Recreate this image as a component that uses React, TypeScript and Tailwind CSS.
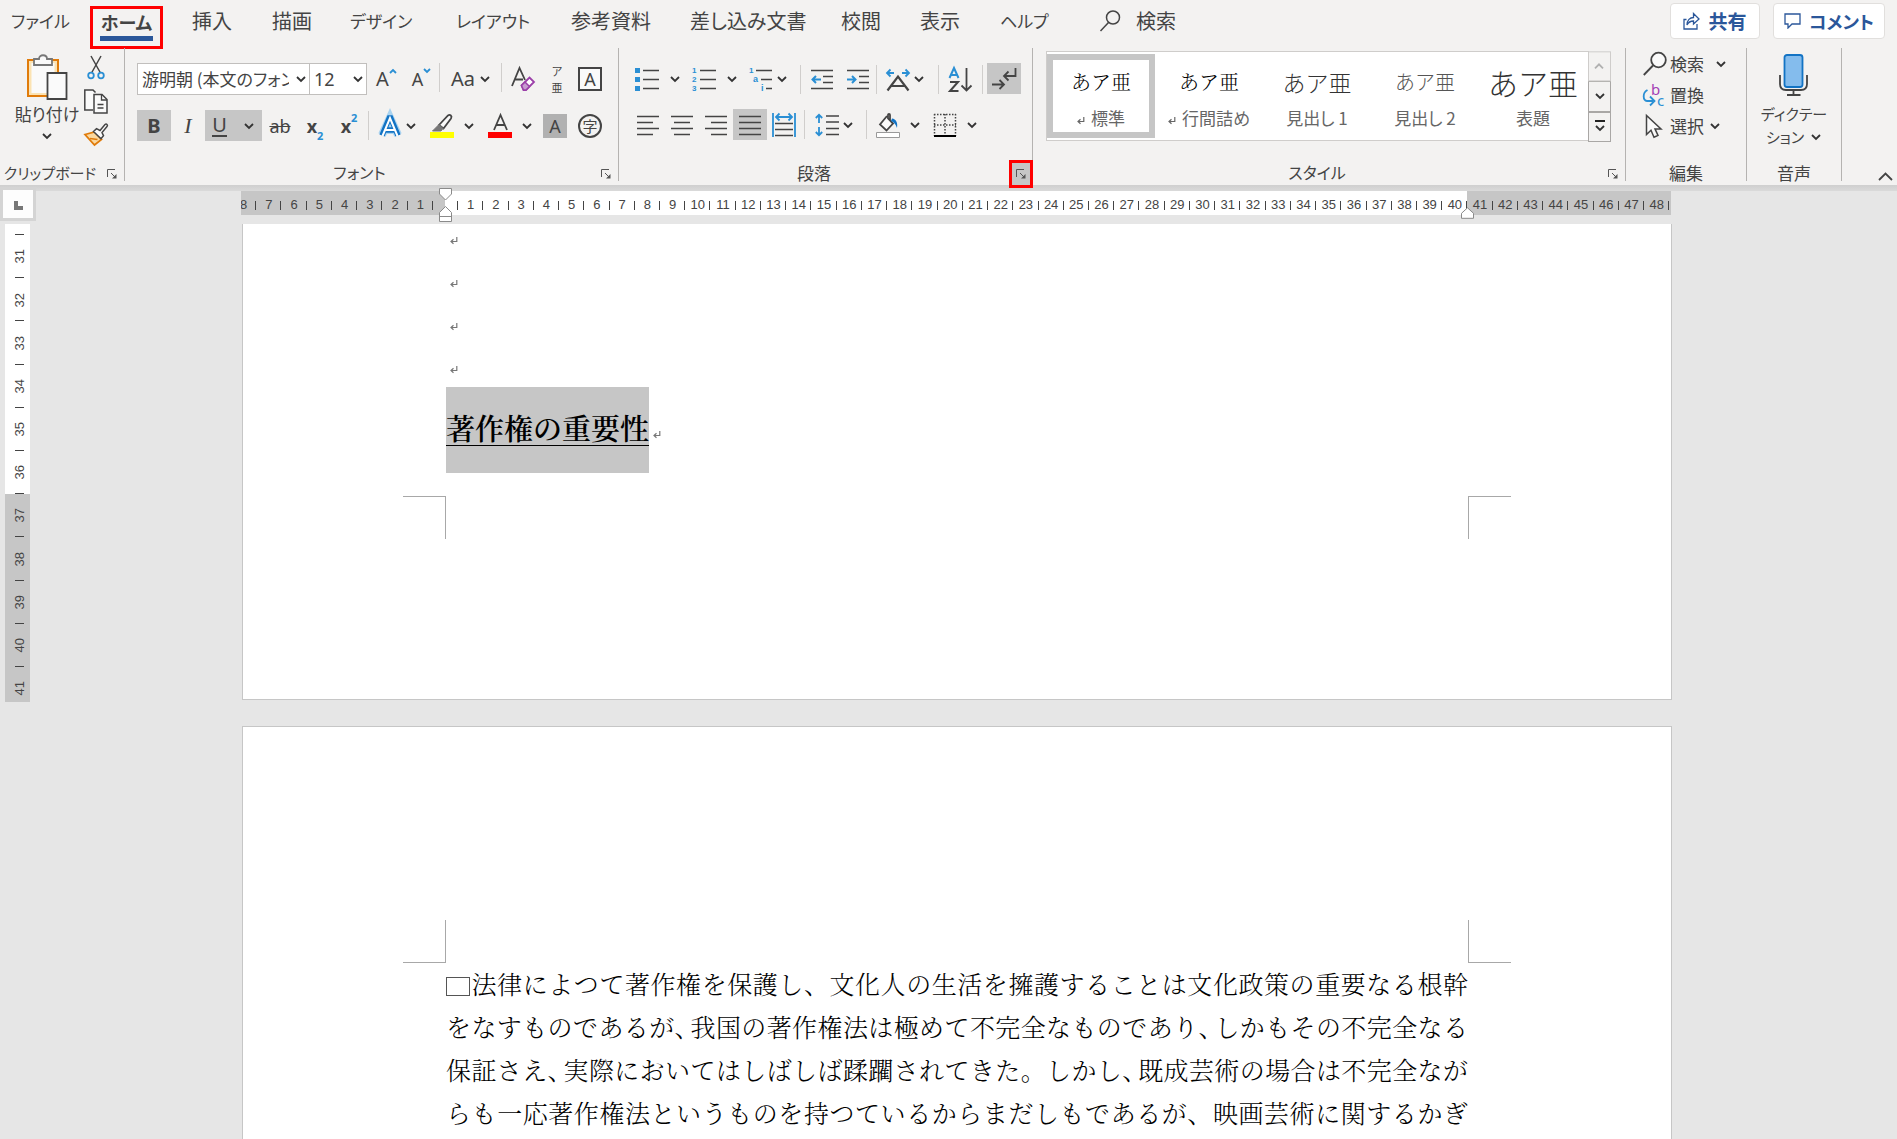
import React from "react";

type Kids = { children?: React.ReactNode };

const UI = "font-['Noto_Sans_CJK_JP','Noto_Sans',sans-serif]";
const MINCHO = "font-['Noto_Serif_CJK_JP','Noto_Serif_JP','Noto_Sans_CJK_JP',serif]";
const KANA = "[font-feature-settings:'palt']";

function Ico({ children, label, w = 24, h = 24 }: Kids & { label?: string; w?: number; h?: number }) {
  return (
    <svg
      width={w}
      height={h}
      viewBox={`0 0 ${w} ${h}`}
      fill="none"
      stroke="#444"
      strokeWidth="1.5"
      className="block shrink-0 overflow-visible"
      role={label ? "img" : undefined}
      aria-label={label}
    >
      {children}
    </svg>
  );
}

function Chev({ color = "#333" }: { color?: string }) {
  return (
    <svg width="12" height="12" viewBox="0 0 12 12" fill="none" stroke={color} strokeWidth="1.8" className="block shrink-0">
      <path d="M2 4l4 4 4-4" />
    </svg>
  );
}

function Btn({ children, label, cls = "w-[34px]" }: Kids & { label: string; cls?: string }) {
  return (
    <button type="button" aria-label={label} className={`flex h-[31px] shrink-0 items-center justify-center ${cls}`}>
      {children}
    </button>
  );
}

function Drop({ children, label, cls }: Kids & { label: string; cls: string }) {
  return (
    <button type="button" aria-label={label} className={`flex h-[31px] shrink-0 items-center pl-2 ${cls}`}>
      {children}
      <Chev />
    </button>
  );
}

function Sep({ cls = "w-1" }: { cls?: string }) {
  return (
    <span className={`flex h-[29px] shrink-0 justify-center ${cls}`}>
      <span className="w-px bg-[#d0cecc]" />
    </span>
  );
}

function LauncherIcon() {
  return (
    <svg width="10" height="10" viewBox="0 0 10 10" fill="none" stroke="#555" strokeWidth="1" className="block overflow-visible">
      <path d="M0.5 8V0.5H8M4 4l4.5 4.5" />
      <path d="M9.5 5v4.5H5z" fill="#555" stroke="none" />
    </svg>
  );
}

function Group({
  children,
  label,
  cls,
  size = "text-base",
  launcher,
  hot,
}: Kids & { label: string; cls: string; size?: string; launcher?: boolean; hot?: boolean }) {
  return (
    <section aria-label={label} className={`flex h-[133px] flex-col border-r border-[#b5b3b1] ${cls}`}>
      <div className="h-[112px]">{children}</div>
      <div className="flex h-[21px] items-start">
        <span className={`flex-1 text-center leading-[25px] whitespace-nowrap ${size} ${KANA}`}>{label}</span>
        {launcher && (
          <button
            type="button"
            aria-label={`${label}の設定`}
            className={
              hot
                ? "z-10 -mr-px flex h-7 w-6 shrink-0 items-center justify-center border-[3px] border-[#f00] bg-[#c6c6c6]"
                : "flex h-7 w-6 shrink-0 items-center justify-center"
            }
          >
            <LauncherIcon />
          </button>
        )}
      </div>
    </section>
  );
}

const TABS: { t: string; w: string }[] = [
  { t: "挿入", w: "w-20" },
  { t: "描画", w: "w-[78px]" },
  { t: "デザイン", w: "w-[106px]" },
  { t: "レイアウト", w: "w-[115px]" },
  { t: "参考資料", w: "w-[119px]" },
  { t: "差し込み文書", w: "w-[151px]" },
  { t: "校閲", w: "w-[79px]" },
  { t: "表示", w: "w-20" },
  { t: "ヘルプ", w: "w-[100px]" },
];

function TabBar() {
  return (
    <nav className={`flex h-12 items-start pt-[3px] text-xl leading-9 whitespace-nowrap ${KANA}`}>
      <button type="button" className="w-[90px] shrink-0 pl-[11px] text-left text-[17px] leading-9">
        ファイル
      </button>
      <button
        type="button"
        aria-current="page"
        className="mt-[3px] mr-[29px] flex h-[43px] w-[73px] shrink-0 flex-col items-center border-[3px] border-[#f00]"
      >
        <span className="h-[27px] text-lg leading-[26px] font-bold">ホーム</span>
        <span className="h-[5px] w-[53px] bg-[#2b579a]" />
      </button>
      {TABS.map((x) => (
        <button
          key={x.t}
          type="button"
          className={`shrink-0 text-left leading-9 ${x.w} ${/^[ァ-ー]+$/.test(x.t) ? "text-[17px]" : "text-xl"}`}
        >
          {x.t}
        </button>
      ))}
      <button type="button" className="flex items-center gap-4">
        <Ico w={20} h={22}>
          <circle cx="13" cy="7.5" r="6.5" />
          <path d="M8.5 12.5L0.5 21" />
        </Ico>
        <span>検索</span>
      </button>
      <div className="ml-auto flex shrink-0 gap-[13px] pr-3 text-[19px] font-bold text-[#2b579a]">
        <button type="button" className="flex h-9 w-[90px] items-center justify-center gap-2 rounded border border-[#e1dfdd] bg-white">
          <svg width="17" height="18" viewBox="0 0 17 18" fill="none" stroke="#2b579a" strokeWidth="1.3">
            <path d="M3.5 7.5H1V17h13v-5" />
            <path d="M4 13c0-5 3-7.500 6.500-7.500V1.500L16 7l-5.500 5V9C7.500 9 5.500 10 4 13z" />
          </svg>
          共有
        </button>
        <button type="button" className="flex h-9 w-[112px] items-center justify-center gap-2 rounded border border-[#e1dfdd] bg-white">
          <svg width="17" height="16" viewBox="0 0 17 16" fill="none" stroke="#2b579a" strokeWidth="1.3">
            <path d="M1 1h15v10H8l-4 4v-4H1z" />
          </svg>
          <span className="text-lg leading-8">コメント</span>
        </button>
      </div>
    </nav>
  );
}

function Clipboard() {
  return (
    <Group label="クリップボード" cls="w-[125px] shrink-0" size="text-[15px]" launcher>
      <div className="flex">
        <button type="button" className="flex w-20 shrink-0 flex-col items-center pt-1.5 pl-3.5">
          <Ico w={42} h={46}>
            <path d="M2 6h30v36H2z" fill="#fbe3b3" stroke="#e07b0a" strokeWidth="2" />
            <path d="M5.500 9h23v30h-23z" fill="#fafafa" stroke="none" />
            <path d="M8 11V5h5c0-5 8-5 8 0h5v6z" fill="#fafafa" stroke="#777" strokeWidth="1.800" />
            <path d="M21.500 19h19v26h-19z" fill="#fafafa" stroke="#444" strokeWidth="1.800" />
          </Ico>
          <span className={`text-[17px] leading-7 whitespace-nowrap ${KANA}`}>貼り付け</span>
          <span className="mt-0.5">
            <Chev />
          </span>
        </button>
        <div className="flex flex-col items-center gap-2.5 pt-[7px] pl-1">
          <button type="button" aria-label="切り取り">
            <Ico>
              <path d="M7 1l9.500 17M17 1L7.500 18" />
              <circle cx="7" cy="20.500" r="2.800" stroke="#2a8fd4" strokeWidth="1.800" />
              <circle cx="17" cy="20.500" r="2.800" stroke="#2a8fd4" strokeWidth="1.800" />
            </Ico>
          </button>
          <button type="button" aria-label="コピー">
            <Ico>
              <path d="M9 21H.8V1H9l2.500 2.500" fill="#fafafa" />
              <path d="M10 5.500h8l5 5V24H10z" fill="#fafafa" />
              <path d="M17.500 5.500V11H23M13.500 15.500h6M13.500 19h6" strokeWidth="1.300" />
            </Ico>
          </button>
          <button type="button" aria-label="書式のコピー/貼り付け">
            <Ico>
              <path d="M1 11.500l9.500-2.500 7 7.500L10.500 22z" fill="#fbd9a0" stroke="#e07b0a" strokeWidth="1.800" />
              <path d="M6 15.500l7.500 1" stroke="#e07b0a" />
              <path d="M9.500 8.500l3-2.800 3.500 1.800L21 1.500c1.500-1.200 3.200.6 2 2L18 9.500l1.500 3.200-2.500 3z" fill="#fafafa" />
            </Ico>
          </button>
        </div>
      </div>
    </Group>
  );
}

const glyph = "font-['Noto_Sans',sans-serif]";

function FontGroup() {
  return (
    <Group label="フォント" cls="w-[494px] shrink-0" launcher>
      <div className="flex h-[62px] items-start pt-[15px] pl-3">
        <div className="relative h-8 w-[173px] shrink-0">
          <select
            aria-label="フォント名"
            className={`h-8 w-full appearance-none overflow-hidden border border-[#c1bfbd] bg-white pr-5 pl-1 text-[17px] leading-[30px] ${KANA}`}
          >
            <option>游明朝 (本文のフォント)</option>
          </select>
          <span className="pointer-events-none absolute top-2.5 right-[3px]">
            <Chev />
          </span>
        </div>
        <div className="relative -ml-px h-8 w-[58px] shrink-0">
          <select
            aria-label="フォント サイズ"
            className="h-8 w-full appearance-none border border-[#c1bfbd] bg-white pl-1 font-['Noto_Sans',sans-serif] text-lg leading-[30px]"
          >
            <option>12</option>
          </select>
          <span className="pointer-events-none absolute top-2.5 right-[3px]">
            <Chev />
          </span>
        </div>
        <Btn label="フォント サイズの拡大" cls="w-[39px]">
          <span className={`flex items-start text-xl leading-6 ${glyph}`}>
            A
            <svg width="8" height="8" viewBox="0 0 8 8" fill="none" stroke="#2a8fd4" strokeWidth="1.800">
              <path d="M1 6l3-3 3 3" />
            </svg>
          </span>
        </Btn>
        <Btn label="フォント サイズの縮小" cls="w-[31px]">
          <span className={`flex items-start text-lg leading-6 ${glyph}`}>
            A
            <svg width="8" height="8" viewBox="0 0 8 8" fill="none" stroke="#2a8fd4" strokeWidth="1.800">
              <path d="M1 2l3 3 3-3" />
            </svg>
          </span>
        </Btn>
        <Sep />
        <Drop label="文字種の変換" cls="w-[58px] gap-0.5">
          <span className={`w-7 text-xl leading-6 ${glyph}`}>Aa</span>
        </Drop>
        <Sep />
        <Btn label="すべての書式をクリア" cls="w-10">
          <Ico>
            <path d="M1 19L8.500 1 14 13M4 12.500h8" strokeWidth="1.800" />
            <path d="M10.500 18.500l8-8 4.500 4.500-8 8h-2.500z" fill="#fff" stroke="#9b3fa8" strokeWidth="1.800" />
            <path d="M10.500 18.500l3.500-3.500 4.500 4.500-3.500 3.500h-2.500z" fill="#c79bd0" stroke="#9b3fa8" strokeWidth="1.500" />
          </Ico>
        </Btn>
        <Btn label="ルビ" cls="w-7">
          <span className="flex flex-col items-center text-[11px] leading-4">
            <span>ア</span>
            <span>亜</span>
          </span>
        </Btn>
        <Btn label="囲み線" cls="w-[38px]">
          <span className={`flex h-6 w-6 items-center justify-center border-2 border-[#444] bg-[#fafafa] text-lg leading-5 ${glyph}`}>A</span>
        </Btn>
      </div>
      <div className="flex h-[31px] items-center pl-3">
        <Btn label="太字" cls="w-[34px] bg-[#c6c6c6]">
          <b className={`text-xl leading-6 ${glyph}`}>B</b>
        </Btn>
        <Btn label="斜体">
          <i className="font-['Liberation_Serif',serif] text-[22px] leading-6">I</i>
        </Btn>
        <Btn label="下線" cls="w-[57px] gap-4 bg-[#c6c6c6]">
          <span className={`border-b-2 border-[#444] text-xl leading-5 ${glyph}`}>U</span>
          <Chev />
        </Btn>
        <Btn label="取り消し線" cls="w-9">
          <span className={`text-lg leading-6 line-through ${glyph}`}>ab</span>
        </Btn>
        <Btn label="下付き">
          <span className={`flex items-end ${glyph}`}>
            <b className="text-lg leading-6">x</b>
            <b className="-mb-1 text-[11px] leading-3 text-[#2a8fd4]">2</b>
          </span>
        </Btn>
        <Btn label="上付き">
          <span className={`flex items-start ${glyph}`}>
            <b className="text-lg leading-6">x</b>
            <b className="-mt-0.5 text-[11px] leading-3 text-[#2a8fd4]">2</b>
          </span>
        </Btn>
        <Sep />
        <Drop label="文字の効果と体裁" cls="w-[52px] gap-[3px]">
          <Ico>
            <path d="M4 21L12 3.500 20 21M7.500 16h9" stroke="#a9d3f0" strokeWidth="8" />
            <path d="M4 21.500L11.300 4h1.400L20 21.500M7.500 16h9" stroke="#1273c4" strokeWidth="5.500" />
            <path d="M4.500 22L12 4 19.500 22M7.500 16h9" stroke="#fff" strokeWidth="2" />
          </Ico>
        </Drop>
        <Drop label="蛍光ペンの色" cls="w-[58px] gap-[9px]">
          <Ico>
            <path d="M9 11L18 1.500c2-1.500 4.500.5 3 3L13.500 14.500z" fill="#fafafa" strokeWidth="1.800" />
            <path d="M9 10.500l4 4L11 17H2.500z" fill="#777" stroke="#777" strokeWidth="1" />
            <path d="M0 18h24v6H0z" fill="#ff0" stroke="none" />
          </Ico>
        </Drop>
        <Drop label="フォントの色" cls="w-[57px] gap-[9px]">
          <Ico>
            <path d="M6 16L12.500 1 19 16M8 11h9" strokeWidth="1.800" />
            <path d="M0 18h24v6H0z" fill="#f00" stroke="none" />
          </Ico>
        </Drop>
        <Btn label="文字の網かけ" cls="w-[36px]">
          <span className={`flex h-6 w-6 items-center justify-center bg-[#b1b1b1] text-lg leading-6 ${glyph}`}>A</span>
        </Btn>
        <Btn label="囲い文字">
          <span className="flex h-6 w-6 items-center justify-center rounded-full border-2 border-[#444] text-[15px] leading-5">字</span>
        </Btn>
      </div>
    </Group>
  );
}

const tiny = { fontFamily: "Liberation Sans, sans-serif", fontWeight: 700, fill: "#2a8fd4", stroke: "none" };

function ParagraphGroup() {
  return (
    <Group label="段落" cls="w-[414px] shrink-0" size="text-[17px]" launcher hot>
      <div className="flex h-[61px] items-end pb-[15px] pl-2">
        <Drop label="箇条書き" cls="w-[57px] gap-2.5">
          <Ico>
            <path d="M0 1h5v5H0zM0 10h5v5H0zM0 19h5v5H0z" fill="#2a8fd4" stroke="none" />
            <path d="M8 3.500h16M8 12.500h16M8 21.500h16" />
          </Ico>
        </Drop>
        <Drop label="段落番号" cls="w-[57px] gap-2.5">
          <Ico>
            <text x="0" y="6" fontSize="8" {...tiny}>1</text>
            <text x="0" y="15" fontSize="8" {...tiny}>2</text>
            <text x="0" y="24" fontSize="8" {...tiny}>3</text>
            <path d="M8 3.500h16M8 12.500h16M8 21.500h16" />
          </Ico>
        </Drop>
        <Drop label="アウトライン" cls="w-[57px] gap-[3px]">
          <Ico>
            <text x="0" y="6" fontSize="8" {...tiny}>1</text>
            <text x="4" y="15" fontSize="9" {...tiny}>a</text>
            <text x="12" y="24" fontSize="9" {...tiny}>i</text>
            <path d="M7 3.500h16M12 12.500h11M17 21.500h6" />
          </Ico>
        </Drop>
        <Sep />
        <Btn label="インデントを減らす" cls="w-10">
          <Ico>
            <path d="M1 3.500h22M13 9.500h10M13 15.500h10M1 21.500h22" />
            <path d="M11 12.500H2.500M6 9l-3.500 3.500L6 16" stroke="#2a8fd4" strokeWidth="2" />
          </Ico>
        </Btn>
        <Btn label="インデントを増やす" cls="w-8">
          <Ico>
            <path d="M1 3.500h22M13 9.500h10M13 15.500h10M1 21.500h22" />
            <path d="M1 12.500h8.500M6 9l3.500 3.500L6 16" stroke="#2a8fd4" strokeWidth="2" />
          </Ico>
        </Btn>
        <Sep />
        <Drop label="拡張書式" cls="w-[58px] gap-[3px]">
          <Ico>
            <path d="M1.500 23.500L12 9.500l10.500 14M5 19h14" strokeWidth="2.200" />
            <path d="M8 6H1.500M4.500 2.500L1 6l3.500 3.500M16 6h6.500M19.500 2.500L23 6l-3.500 3.500" stroke="#2a8fd4" strokeWidth="1.800" />
          </Ico>
        </Drop>
        <Sep />
        <Btn label="並べ替え" cls="w-10">
          <Ico>
            <path d="M1.500 11L6 1l4.500 10M3 8h6" stroke="#2a8fd4" strokeWidth="2" />
            <path d="M2 15h8l-8 9h8.500" strokeWidth="2" />
            <path d="M18.500 1v22.500M13.500 18.500l5 5 5-5" strokeWidth="1.800" />
          </Ico>
        </Btn>
        <Sep />
        <Btn label="編集記号の表示/非表示" cls="ml-[3px] w-[34px] bg-[#c6c6c6]">
          <Ico>
            <path d="M23.500 1v8h-11M16.500 4.500l-4.500 4.500 4.500 4.500M0 17.500h11.500M7.500 13l4.500 4.500-4.500 4.500" strokeWidth="1.800" />
          </Ico>
        </Btn>
      </div>
      <div className="flex h-[31px] items-center pl-3">
        <Btn label="左揃え">
          <Ico>
            <path d="M1 3.500h22M1 9.500h16M1 15.500h22M1 21.500h16" />
          </Ico>
        </Btn>
        <Btn label="中央揃え">
          <Ico>
            <path d="M1 3.500h22M4 9.500h16M1 15.500h22M4 21.500h16" />
          </Ico>
        </Btn>
        <Btn label="右揃え">
          <Ico>
            <path d="M1 3.500h22M7 9.500h16M1 15.500h22M7 21.500h16" />
          </Ico>
        </Btn>
        <Btn label="両端揃え" cls="w-[34px] bg-[#c6c6c6]">
          <Ico>
            <path d="M1 3.500h22M1 9.500h22M1 15.500h22M1 21.500h22" />
          </Ico>
        </Btn>
        <Btn label="均等割り付け">
          <Ico>
            <path d="M1 0v24M23 0v24" stroke="#2a8fd4" strokeWidth="1.800" />
            <path d="M4 4h16M7.500.5L4 4l3.500 3.500M16.500.5L20 4l-3.500 3.500" stroke="#2a8fd4" strokeWidth="1.800" />
            <path d="M3 10.500h18M3 16.500h18M3 22.500h18" />
          </Ico>
        </Btn>
        <Sep cls="w-[6px]" />
        <Drop label="行と段落の間隔" cls="w-[57px] gap-[3px]">
          <Ico>
            <path d="M11 3h13M11 9h13M11 15.500h13M11 21.500h13" />
            <path d="M4 2v8M.8 5L4 1.800 7.200 5M4 14v8M.8 19L4 22.200 7.200 19" stroke="#2a8fd4" strokeWidth="1.800" />
          </Ico>
        </Drop>
        <Sep />
        <Drop label="塗りつぶし" cls="w-[57px] gap-[9px]">
          <Ico>
            <path d="M11 3l-7 8.500 6.500 6L17 10.500 12 5.500V2c0-1.500 2-1.500 2 0v5" strokeWidth="1.800" fill="#fafafa" />
            <path d="M16 5.500c4 .5 6 4 5 9.500-1.500-4-3-6-6-7z" fill="#1273c4" stroke="none" />
            <path d="M.5 19.500h23v5H.5z" fill="#fff" stroke="#999" strokeWidth="1" />
          </Ico>
        </Drop>
        <Drop label="罫線" cls="w-[57px] gap-[9px]">
          <Ico>
            <path d="M1 1.500h22M1 12h22M1.500 1v22M12 1v22M22.500 1v22" strokeDasharray="1.500 1.500" />
            <path d="M1 23h22" stroke="#000" strokeWidth="2" />
          </Ico>
        </Drop>
      </div>
    </Group>
  );
}

const STYLES: { name: string; size: string; mark?: boolean; tone: string; font: string }[] = [
  { name: "標準", size: "text-xl", mark: true, tone: "text-black", font: MINCHO },
  { name: "行間詰め", size: "text-xl", mark: true, tone: "text-black", font: MINCHO },
  { name: "見出し 1", size: "text-[23px]", tone: "text-[#333]", font: UI },
  { name: "見出し 2", size: "text-xl", tone: "text-[#555]", font: UI },
  { name: "表題", size: "text-[30px]", tone: "text-[#333]", font: UI },
];

function ReturnMark({ cls }: { cls: string }) {
  return (
    <svg width="8" height="8" viewBox="0 0 8 8" fill="none" stroke="currentColor" strokeWidth="1.200" className={`inline-block shrink-0 ${cls}`}>
      <path d="M6.800 0v4.500H1.500M3.500 2.200L1 4.500l2.500 2.300" />
    </svg>
  );
}

function StylesGroup() {
  return (
    <Group label="スタイル" cls="min-w-0 flex-1" launcher>
      <div className="flex pt-[3px] pl-[13px]">
        <div className="flex h-[90px] w-[543px] overflow-hidden border border-[#cfcdcb] bg-white py-0.5">
          {STYLES.map((s, i) => (
            <button
              key={s.name}
              type="button"
              className={`flex w-[108px] shrink-0 flex-col items-center ${
                i === 0 ? "border-[6px] border-[#c6c6c6] pt-1.5" : "pt-3"
              }`}
            >
              <span className={`flex h-8 items-center leading-8 font-light whitespace-nowrap ${s.size} ${s.tone} ${s.font}`}>あア亜</span>
              <span className={`mt-1.5 flex items-center gap-1.5 text-[17px] leading-7 whitespace-nowrap text-[#666] ${KANA}`}>
                {s.mark && <ReturnMark cls="mt-1.5" />}
                {s.name}
              </span>
            </button>
          ))}
        </div>
        <div className="-ml-px flex h-[91px] w-[23px] shrink-0 flex-col">
          <button type="button" aria-label="前のスタイル" className="flex flex-1 rotate-180 items-center justify-center border border-[#cfcdcb]">
            <Chev color="#b0b0b0" />
          </button>
          <button type="button" aria-label="次のスタイル" className="flex flex-1 items-center justify-center border border-[#a9a7a5]">
            <Chev />
          </button>
          <button type="button" aria-label="その他のスタイル" className="flex flex-1 flex-col items-center justify-center border border-[#a9a7a5]">
            <span className="h-0.5 w-2.5 bg-[#222]" />
            <Chev />
          </button>
        </div>
      </div>
    </Group>
  );
}

function EditGroup() {
  return (
    <Group label="編集" cls="w-[121px] shrink-0" size="text-[17px]">
      <div className="flex flex-col pl-[17px] text-[17px] leading-[31px]">
        <button type="button" className="flex h-[31px] items-center gap-[3px]">
          <Ico>
            <circle cx="15.500" cy="8" r="7.300" fill="#fafafa" strokeWidth="1.800" />
            <path d="M10 13.500L.8 23" strokeWidth="1.800" />
          </Ico>
          検索
          <span className="ml-2">
            <Chev />
          </span>
        </button>
        <button type="button" className="flex h-[31px] items-center gap-[3px]">
          <Ico>
            <text x="8" y="12" fontSize="15" fontFamily="Noto Sans, sans-serif" fill="#a33fb5" stroke="none">b</text>
            <text x="14" y="23" fontSize="15" fontFamily="Noto Sans, sans-serif" fill="#2a8fd4" stroke="none">c</text>
            <path d="M4.500 7C-1 10 0 17.500 4 18h6M7 13.500l4.500 4.500L7 22.500" stroke="#2a8fd4" strokeWidth="1.800" />
          </Ico>
          置換
        </button>
        <button type="button" className="flex h-[31px] items-center gap-[3px]">
          <Ico>
            <path d="M3.500 1.500v19l4.500-4.300 3 7 4-1.800-3-6.500h6z" fill="#fafafa" />
          </Ico>
          選択
          <span className="ml-0.5">
            <Chev />
          </span>
        </button>
      </div>
    </Group>
  );
}

function VoiceGroup() {
  return (
    <Group label="音声" cls="w-[95px] shrink-0" size="text-[17px]">
      <button type="button" className={`flex w-full flex-col items-center pt-1.5 text-base ${KANA}`}>
        <Ico w={30} h={42}>
          <rect x="5.500" y="1" width="18" height="32" rx="2.500" fill="#84bced" stroke="#1273c4" strokeWidth="1.800" />
          <path d="M1 21v9c0 3.500 2 6 6 6h15c4 0 6-2.500 6-6v-9M14.500 36v5M8 41h13.500" strokeWidth="1.800" />
        </Ico>
        <span className="mt-1.5 text-[15px] leading-[23px]">ディクテー</span>
        <span className="flex items-center gap-1.5 text-[15px] leading-[23px]">
          ション
          <Chev />
        </span>
      </button>
    </Group>
  );
}

const H_UNITS = Array.from({ length: 57 }, (_, i) => i - 8);
const V_UNITS = Array.from({ length: 11 }, (_, i) => i + 31);

function HorizontalRuler() {
  return (
    <div className="relative h-6 w-[1430px] shrink-0">
      <div className="h-6 overflow-hidden bg-[linear-gradient(to_right,#c6c6c6_204px,#fff_204px,#fff_1226px,#c6c6c6_1226px)]">
        <div className="mr-0.5 -ml-2.5 flex h-6 items-center pt-1 font-['Liberation_Sans',sans-serif] text-[13px] leading-5">
          {H_UNITS.map((n) => (
            <span key={n} className="relative flex min-w-0 flex-1 items-center justify-center">
              {n === 0 ? "\u00a0" : Math.abs(n)}
              <span className="absolute right-0 h-[9px] w-px bg-[#444]" />
            </span>
          ))}
        </div>
      </div>
      <svg width="13" height="36" viewBox="0 0 13 36" fill="#fff" stroke="#8a8a8a" className="absolute -top-1 left-[198px]">
        <path d="M.5 1.500h12v5.500l-6 6-6-6z" />
        <path d="M6.500 19.500l6 6v9H.5v-9zM.5 29.500h12" />
      </svg>
      <svg width="13" height="12" viewBox="0 0 13 12" fill="#fff" stroke="#8a8a8a" className="absolute top-4 left-[1220px]">
        <path d="M6.500.8l6 5.500v5H.5v-5z" />
      </svg>
    </div>
  );
}

function VerticalRuler() {
  return (
    <div className="ml-[5px] h-[478px] w-[25px] overflow-hidden bg-[linear-gradient(to_bottom,#fff_270px,#c6c6c6_270px)] pt-2.5">
      <div className="flex h-[475px] flex-col pl-1 font-['Liberation_Sans',sans-serif] text-[13px] leading-4">
        {V_UNITS.map((n) => (
          <span key={n} className="relative flex min-h-0 flex-1 items-center justify-center pt-0.5">
            <span className="absolute top-0 h-px w-[9px] bg-[#444]" />
            <span className="rotate-180 [writing-mode:vertical-rl]">{n}</span>
          </span>
        ))}
      </div>
    </div>
  );
}

function Half({ children }: Kids) {
  return <span className="pr-[3px] [font-feature-settings:'halt']">{children}</span>;
}

function DocumentPages() {
  return (
    <main className={`flex min-w-0 flex-1 flex-col items-center gap-[26px] pr-[13px] ${MINCHO}`}>
      <article className="h-[476px] w-[1430px] shrink-0 overflow-hidden border border-t-0 border-[#c6c6c6] bg-white">
        <div className="-mt-[9px] pl-[203px] text-[#777]">
          {[0, 1, 2, 3].map((k) => (
            <div key={k} className="flex h-[43px] items-center pt-2 pl-1">
              <ReturnMark cls="" />
            </div>
          ))}
          <div className="flex items-center">
            <h1 className="h-[86px] bg-[#c6c6c6] text-[29px] leading-[82px] font-semibold whitespace-nowrap text-black underline decoration-1 underline-offset-[5px]">
              著作権の重要性
            </h1>
            <ReturnMark cls="mt-2.5 ml-1" />
          </div>
        </div>
        <div className="mx-[160px] mt-[23px] flex h-[43px] justify-between">
          <span className="w-[43px] border-t border-r border-[#a8a8a8]" />
          <span className="w-[43px] border-t border-l border-[#a8a8a8]" />
        </div>
      </article>
      <article className="h-[440px] w-[1430px] shrink-0 border border-[#c6c6c6] bg-white pt-[193px]">
        <div className="mx-[160px] flex h-[43px] justify-between">
          <span className="w-[43px] border-r border-b border-[#a8a8a8]" />
          <span className="w-[43px] border-b border-l border-[#a8a8a8]" />
        </div>
        <div className="mx-[203px] -mt-px text-[25px] leading-[43px] font-light whitespace-nowrap text-black [text-align-last:justify]">
          <p>
            <span className="mr-px inline-block h-[19px] w-6 border border-[#555] align-[-2px]" />
            法律によつて著作権を保護し、文化人の生活を擁護することは文化政策の重要なる根幹
          </p>
          <p>
            をなすものであるが<Half>、</Half>我国の著作権法は極めて不完全なものであり<Half>、</Half>しかもその不完全なる
          </p>
          <p>
            保証さえ<Half>、</Half>実際においてはしばしば蹂躙されてきた。しかし<Half>、</Half>既成芸術の場合は不完全なが
          </p>
          <p>らも一応著作権法というものを持つているからまだしもであるが、映画芸術に関するかぎ</p>
        </div>
      </article>
    </main>
  );
}

export default function App() {
  return (
    <div lang="ja" className={`h-screen overflow-hidden bg-[#e6e6e6] text-[#444] ${UI}`}>
      <header className="h-[185px] bg-[#f3f2f1]">
        <TabBar />
        <div className="flex h-[137px]">
          <Clipboard />
          <FontGroup />
          <ParagraphGroup />
          <StylesGroup />
          <EditGroup />
          <VoiceGroup />
          <div className="flex w-[55px] shrink-0 items-end justify-end pr-1">
            <button type="button" aria-label="リボンを折りたたむ">
              <Ico w={15} h={14}>
                <path d="M1 9l6.500-6.500L14 9" strokeWidth="1.800" />
              </Ico>
            </button>
          </div>
        </div>
      </header>
      <div className="h-1.5 bg-linear-to-b from-[#cfcfcf] to-[#dadada]" />
      <div className="flex h-[33px]">
        <button
          type="button"
          aria-label="左揃えタブ"
          className="-mt-1 flex h-[34px] w-9 shrink-0 items-center justify-center border-[3px] border-[#d4d4d4] bg-[#fdfdfd]"
        >
          <span className="mt-0.5 block size-[9px] border-b-4 border-l-4 border-[#777]" />
        </button>
        <div className="-ml-1.5 flex min-w-0 flex-1 justify-center pr-[15px]">
          <HorizontalRuler />
        </div>
      </div>
      <div className="flex">
        <VerticalRuler />
        <DocumentPages />
      </div>
    </div>
  );
}
